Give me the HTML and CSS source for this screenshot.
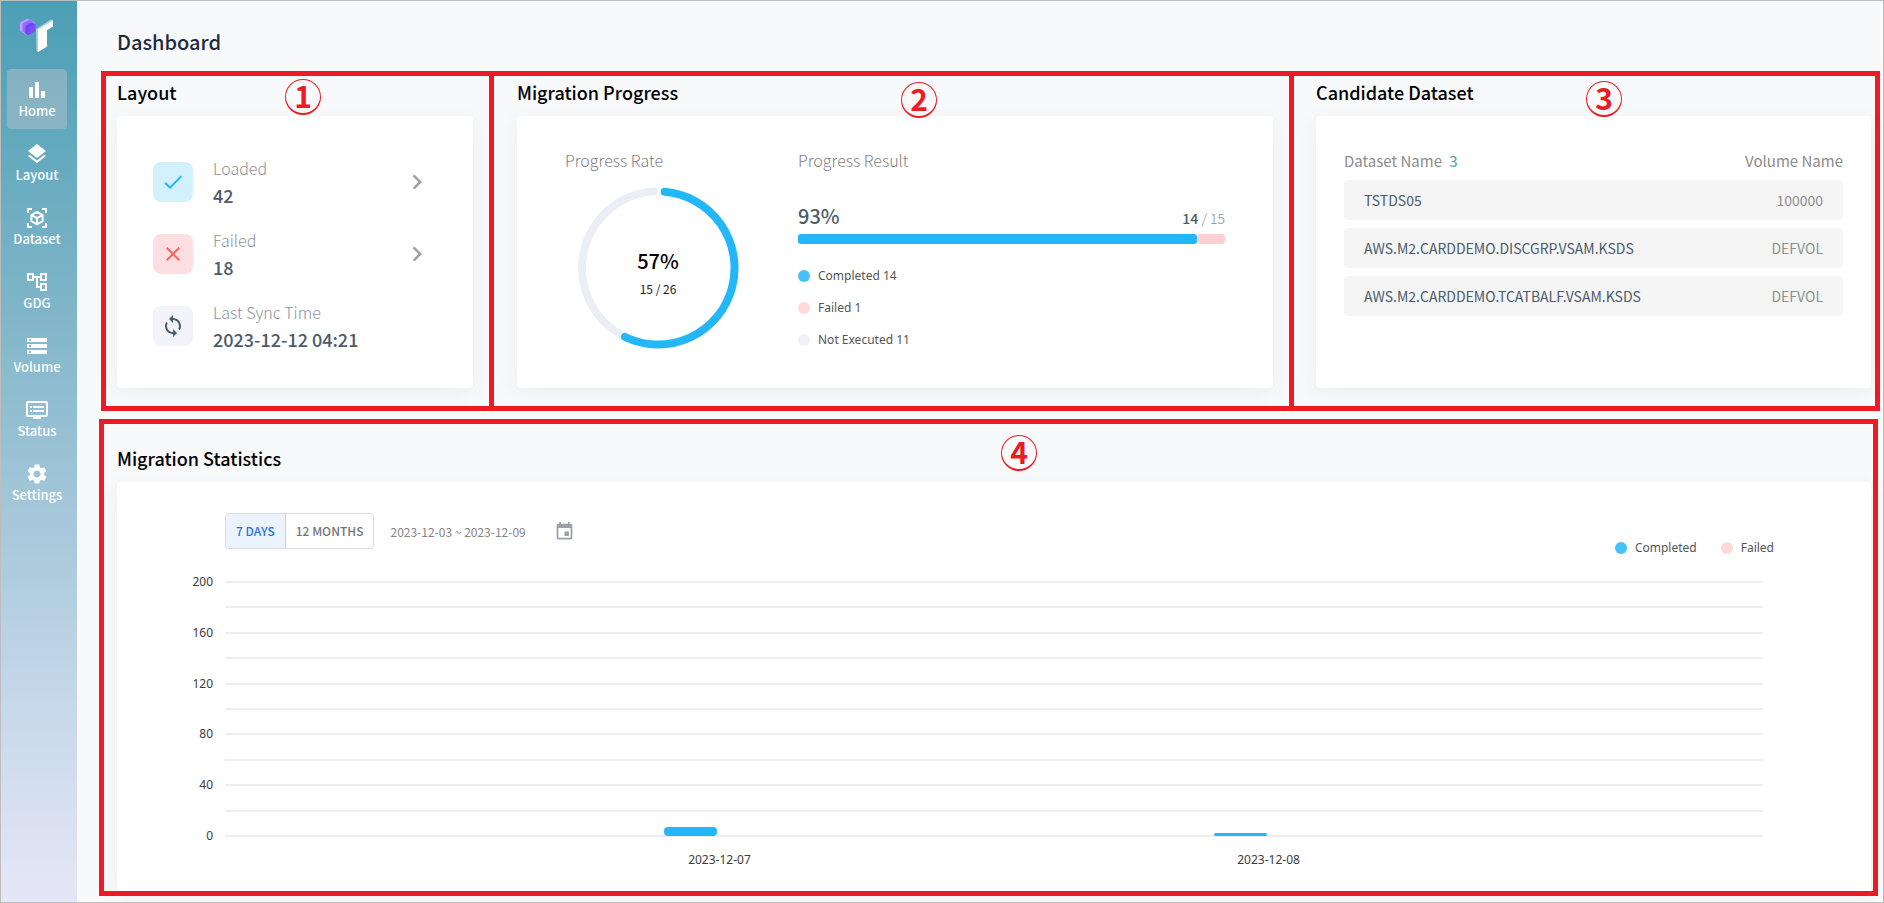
FILE: index.html
```html
<!DOCTYPE html>
<html lang="en">
<head>
<meta charset="utf-8">
<title>Dashboard</title>
<link rel="stylesheet" href="styles.css">
</head>
<body>
<div class="app">
  <nav class="sidebar" aria-label="Main">
    <svg class="logo" viewBox="0 0 36 36" aria-hidden="true">
      <path d="M1 4.500 8.500 0.500 16 4.500V13L8.500 17.500 1 13z" fill="#b9a2ff"/>
      <path d="M3.500 5.500 10 2 16 5V13.200L9.500 17 3.500 13.500z" fill="#8f6bff"/>
      <path d="M6.500 8 12 4.800 16.200 6.500V13L9 17.200 6.500 15.500z" fill="#6f42f5"/>
      <path d="M9.500 9.500 16.200 5.800V13L9 17.200z" fill="#7b4dff"/>
      <path d="M17 11 32 1.500 34 2 34 8 27.500 12V29L19 34 17.500 33z" fill="#a9d3de"/>
      <path d="M19 11.500 34 2.500V8.500L28 12.300V28.500L19 34z" fill="#fff"/>
    </svg>
    <a class="nav-item nav-item-active" href="#home">
      <svg class="icon" viewBox="0 0 24 24"><path d="M4 9h4v11H4zM16 13h4v7h-4zM10 4h4v16h-4z"/></svg>
      Home
    </a>
    <a class="nav-item" href="#layout">
      <svg class="icon" viewBox="0 0 24 24"><path d="M11.990 18.540l-7.370-5.730L3 14.070l9 7 9-7-1.630-1.270-7.380 5.740zM12 16l7.360-5.730L21 9l-9-7-9 7 1.630 1.270L12 16z"/></svg>
      Layout
    </a>
    <a class="nav-item" href="#dataset">
      <svg class="icon icon-line" viewBox="0 0 24 24"><path d="M3 7V3h4M17 3h4v4M21 17v4h-4M7 21H3v-4M12 5.800l5.600 3.200v6.200L12 18.400l-5.600-3.200V9zM6.400 9l5.600 3.200L17.600 9M12 12.200v6.200"/></svg>
      Dataset
    </a>
    <a class="nav-item" href="#gdg">
      <svg class="icon" viewBox="0 0 24 24"><path d="M22 11V3h-7v3H9V3H2v8h7V8h2v10h4v3h7v-8h-7v3h-2V8h2v3h7zM7 9H4V5h3v4zm10 6h3v4h-3v-4zm0-10h3v4h-3V5z"/></svg>
      GDG
    </a>
    <a class="nav-item" href="#volume">
      <svg class="icon" viewBox="0 0 24 24"><path d="M2 20h20v-4H2v4zm2-3h2v2H4v-2zM2 4v4h20V4H2zm4 3H4V5h2v2zm-4 7h20v-4H2v4zm2-3h2v2H4v-2z"/></svg>
      Volume
    </a>
    <a class="nav-item" href="#status">
      <svg class="icon" viewBox="0 0 24 24"><path d="M21 3H3c-1.100 0-2 .9-2 2v12c0 1.100.9 2 2 2h5v2h8v-2h5c1.100 0 1.990-.9 1.990-2L23 5c0-1.100-.9-2-2-2zm0 14H3V5h18v12zm-2-9H8v2h11V8zm0 4H8v2h11v-2zM7 8H5v2h2V8zm0 4H5v2h2v-2z"/></svg>
      Status
    </a>
    <a class="nav-item" href="#settings">
      <svg class="icon" viewBox="0 0 24 24"><path d="M19.140 12.940c.04-.3.060-.61.060-.94 0-.32-.02-.64-.07-.94l2.030-1.580c.18-.14.230-.41.120-.61l-1.920-3.320c-.12-.22-.37-.29-.59-.22l-2.390.96c-.5-.38-1.030-.7-1.620-.94l-.36-2.540c-.04-.24-.24-.41-.48-.41h-3.840c-.24 0-.43.170-.47.410l-.36 2.540c-.59.240-1.130.570-1.620.940l-2.390-.96c-.22-.08-.47 0-.59.220L2.740 8.870c-.12.210-.08.470.120.610l2.030 1.580c-.05.3-.09.630-.09.940s.02.640.070.940l-2.030 1.580c-.18.140-.23.410-.12.610l1.920 3.320c.12.220.370.290.590.220l2.390-.96c.5.380 1.030.7 1.620.940l.36 2.540c.05.240.240.410.480.410h3.840c.24 0 .44-.17.470-.41l.36-2.540c.59-.24 1.130-.56 1.620-.94l2.390.96c.22.080.470 0 .59-.22l1.920-3.320c.12-.22.070-.47-.12-.61l-2.010-1.580zM12 15.600c-1.980 0-3.600-1.620-3.600-3.600s1.620-3.600 3.600-3.600 3.600 1.620 3.600 3.600-1.620 3.600-3.600 3.600z"/></svg>
      Settings
    </a>
  </nav>

  <main class="main">
    <h1 class="page-title">Dashboard</h1>

    <div class="overview">
      <section class="panel panel-layout">
        <span class="callout callout-1">1</span>
        <h2 class="panel-title">Layout</h2>
        <div class="card status-list">
          <div class="status-row">
            <span class="badge badge-ok"><svg class="icon" viewBox="0 0 24 24"><path d="M9 16.170 4.830 12l-1.420 1.410L9 19 21 7l-1.410-1.410z"/></svg></span>
            <div class="status-text"><span class="muted">Loaded</span><span class="value">42</span></div>
            <button class="icon-button" type="button" aria-label="Show loaded"><svg class="chevron" viewBox="0 0 24 24"><path d="M10 6 8.590 7.410 13.170 12l-4.580 4.590L10 18l6-6z"/></svg></button>
          </div>
          <div class="status-row">
            <span class="badge badge-fail"><svg class="icon" viewBox="0 0 24 24"><path d="M19 6.410 17.590 5 12 10.590 6.410 5 5 6.410 10.590 12 5 17.590 6.410 19 12 13.410 17.590 19 19 17.590 13.410 12z"/></svg></span>
            <div class="status-text"><span class="muted">Failed</span><span class="value">18</span></div>
            <button class="icon-button" type="button" aria-label="Show failed"><svg class="chevron" viewBox="0 0 24 24"><path d="M10 6 8.590 7.410 13.170 12l-4.580 4.590L10 18l6-6z"/></svg></button>
          </div>
          <div class="status-row">
            <span class="badge badge-sync"><svg class="icon" viewBox="0 0 24 24"><path d="M12 4V1L8 5l4 4V6c3.310 0 6 2.690 6 6 0 1.010-.25 1.970-.7 2.800l1.460 1.460C19.540 15.030 20 13.570 20 12c0-4.420-3.580-8-8-8zm0 14c-3.310 0-6-2.690-6-6 0-1.010.25-1.970.7-2.800L5.240 7.740C4.460 8.970 4 10.430 4 12c0 4.420 3.580 8 8 8v3l4-4-4-4v3z"/></svg></span>
            <div class="status-text"><span class="muted">Last Sync Time</span><span class="value">2023-12-12 04:21</span></div>
          </div>
        </div>
      </section>

      <section class="panel panel-progress">
        <span class="callout callout-2">2</span>
        <h2 class="panel-title">Migration Progress</h2>
        <div class="card progress">
          <div class="rate">
            <h3 class="card-label">Progress Rate</h3>
            <div class="ring">
              <svg class="ring-chart" viewBox="-81 -81 162 162" aria-hidden="true">
                <path class="ring-rest" d="M-38 66A76.500 76.500 0 0 1-4-76.400"/>
                <path class="ring-done" d="M6.700-76.200A76.500 76.500 0 1 1-33 69"/>
              </svg>
              <div class="ring-text"><strong class="ring-value">57%</strong><span class="ring-count">15 / 26</span></div>
            </div>
          </div>
          <div class="result">
            <h3 class="card-label">Progress Result</h3>
            <div class="result-head">
              <strong class="result-value">93%</strong>
              <span class="result-count"><b class="result-done">14</b> / 15</span>
            </div>
            <div class="bar"><span class="bar-done" style="width:93.4%"></span><span class="bar-failed"></span></div>
            <ul class="legend legend-column">
              <li class="legend-item"><span class="dot dot-done"></span>Completed 14</li>
              <li class="legend-item"><span class="dot dot-failed"></span>Failed 1</li>
              <li class="legend-item"><span class="dot dot-rest"></span>Not Executed 11</li>
            </ul>
          </div>
        </div>
      </section>

      <section class="panel panel-candidate">
        <span class="callout callout-3">3</span>
        <h2 class="panel-title">Candidate Dataset</h2>
        <div class="card candidate">
          <table class="datasets">
            <thead><tr><th>Dataset Name <span class="count">3</span></th><th>Volume Name</th></tr></thead>
            <tbody>
              <tr><td>TSTDS05</td><td>100000</td></tr>
              <tr><td>AWS.M2.CARDDEMO.DISCGRP.VSAM.KSDS</td><td>DEFVOL</td></tr>
              <tr><td>AWS.M2.CARDDEMO.TCATBALF.VSAM.KSDS</td><td>DEFVOL</td></tr>
            </tbody>
          </table>
        </div>
      </section>
    </div>

    <section class="panel panel-statistics">
      <span class="callout callout-4">4</span>
      <h2 class="panel-title">Migration Statistics</h2>
      <div class="card statistics">
        <div class="toolbar">
          <div class="toggle">
            <button class="toggle-button toggle-button-on" type="button" aria-pressed="true">7 DAYS</button>
            <button class="toggle-button" type="button" aria-pressed="false">12 MONTHS</button>
          </div>
          <span class="range">2023-12-03 ~ 2023-12-09</span>
          <button class="icon-button calendar-button" type="button" aria-label="Pick dates"><svg class="calendar" viewBox="0 0 24 24"><path d="M17 12h-5v5h5v-5zM16 1v2H8V1H6v2H5c-1.110 0-1.990.9-1.990 2L3 19c0 1.100.890 2 2 2h14c1.100 0 2-.9 2-2V5c0-1.100-.9-2-2-2h-1V1h-2zm3 18H5V8h14v11z"/></svg></button>
          <ul class="legend">
            <li class="legend-item"><span class="dot dot-done"></span>Completed</li>
            <li class="legend-item"><span class="dot dot-failed"></span>Failed</li>
          </ul>
        </div>
        <div class="chart">
          <div class="y-axis"><span>200</span><span>160</span><span>120</span><span>80</span><span>40</span><span>0</span></div>
          <div class="plot">
            <div class="grid-lines"><i></i><i></i><i></i><i></i><i></i><i></i><i></i><i></i><i></i><i></i><i></i></div>
            <div class="bars">
              <div class="bar-group"><span class="column" style="height:3.5%"></span><span class="column column-failed" style="height:0%"></span></div>
              <div class="bar-group"><span class="column" style="height:1%"></span><span class="column column-failed" style="height:0%"></span></div>
            </div>
          </div>
          <div class="x-axis"><span>2023-12-07</span><span>2023-12-08</span></div>
        </div>
      </div>
    </section>
  </main>
</div>
</body>
</html>
```
FILE: styles.css
```css
:root {
  --mark: #ed1c24;
  --blue: #24b7f8;
  --pink: #ffd0d3;
  --slate: #4b5b6b;
  --ui: "Noto Sans CJK KR", "Noto Sans CJK SC", "Noto Sans", sans-serif;
  --chart: "Noto Sans", "Open Sans", sans-serif;
}

* { box-sizing: border-box; }

body {
  margin: 0;
  background: #f8f9fb;
  color: #000;
  font-family: var(--ui);
  font-size: 16px;
}

h1, h2, h3, ul { margin: 0; padding: 0; font-weight: 500; }
ul { list-style: none; }

button {
  margin: 0;
  padding: 0;
  border: 0;
  background: none;
  font: inherit;
  color: inherit;
}

.app {
  display: flex;
  min-height: 100vh;
  border: 1px solid #bdbdbd;
}

.icon { width: 24px; height: 24px; fill: currentColor; }
.icon-line { fill: none; stroke: currentColor; stroke-width: 2; }

/* Sidebar */
.sidebar {
  display: flex;
  flex: none;
  flex-direction: column;
  align-items: center;
  gap: 4px;
  width: 76px;
  padding: 17px 10px 0 6px;
  background: linear-gradient(#4b9fb5, #79b2c6 30%, #a6c8da 58%, #c6d8ea 78%, #e6e7f6);
}

.logo { width: 36px; height: 36px; margin-bottom: 11px; }

.nav-item {
  display: flex;
  flex-direction: column;
  align-items: center;
  width: 60px;
  height: 60px;
  padding-top: 9px;
  border-radius: 4px;
  color: #fff;
  font-size: 13px;
  font-weight: 500;
  line-height: 18px;
  text-decoration: none;
}

.nav-item-active { background: rgba(188, 196, 204, .45); }

/* Page */
.main { flex: 1; min-width: 0; padding: 26px 5px 6px 22px; }

.page-title {
  margin: 0 0 14px 18px;
  color: #1f2a3f;
  font-size: 20px;
  line-height: 30px;
}

.overview {
  display: grid;
  grid-template-columns: minmax(0, 393fr) minmax(0, 800fr) minmax(0, 586fr);
  margin: 0 -2px 8px 2px;
}

.panel {
  position: relative;
  display: flex;
  flex-direction: column;
  padding: 4px 16px 18px 11px;
  border: 5px solid var(--mark);
}

.panel-progress { margin-left: -5px; padding-left: 23px; }
.panel-candidate { margin-left: -5px; padding-left: 22px; padding-right: 4px; }
.panel-statistics { padding: 22px 2px 0 13px; }

.panel-title { margin-bottom: 12px; font-size: 18px; line-height: 24px; }

.card {
  flex: 1;
  border-radius: 4px;
  background: #fff;
  box-shadow: 0 5px 20px rgba(60, 65, 75, .06);
}

.callout {
  position: absolute;
  display: grid;
  place-items: center;
  width: 36px;
  height: 36px;
  padding-bottom: 3px;
  border: 1px solid var(--mark);
  border-bottom-width: 2px;
  border-radius: 50%;
  color: var(--mark);
  font-size: 30px;
  font-weight: 700;
  line-height: 30px;
}

.callout-1 { top: 3px; left: 179px; }
.callout-2 { top: 6px; left: 407px; }
.callout-3 { top: 5px; left: 292px; }
.callout-4 { top: 11px; left: 897px; }

/* Layout card */
.status-list {
  display: flex;
  flex-direction: column;
  gap: 18px;
  padding: 39px 41px 35px 36px;
}

.status-row { display: flex; align-items: center; gap: 20px; }

.badge {
  display: grid;
  place-items: center;
  width: 40px;
  height: 40px;
  border-radius: 8px;
}

.badge-ok { background: #d3f0fd; color: #24b7f8; }
.badge-fail { background: #fedfe1; color: #fb6369; }
.badge-sync { background: #f3f4f9; color: var(--slate); }

.status-text { display: flex; flex: 1; flex-direction: column; line-height: 27px; }
.muted { color: #8d929b; font-weight: 300; }
.value { color: var(--slate); font-size: 18px; font-weight: 500; }

.icon-button { display: grid; place-items: center; color: #9ba1a9; }
.chevron { width: 30px; height: 30px; fill: currentColor; }

/* Progress card */
.progress {
  display: grid;
  grid-template-columns: 233px minmax(0, 1fr);
  padding: 32px 48px 0 48px;
}

.card-label { color: #7f7f7f; font-size: 16px; font-weight: 300; line-height: 24px; }

.ring {
  display: grid;
  place-items: center;
  width: 162px;
  height: 162px;
  margin: 15px 0 0 12px;
}

.ring-chart, .ring-text { grid-area: 1 / 1; }
.ring-chart { width: 162px; height: 162px; }
.ring-chart path { fill: none; stroke-width: 8; stroke-linecap: round; }
.ring-rest { stroke: #ebeff5; }
.ring-done { stroke: var(--blue); }
.ring-text { display: flex; flex-direction: column; align-items: center; line-height: 28px; padding-top: 14px; }
.ring-value { font-size: 20px; font-weight: 500; }
.ring-count { color: #222; font-size: 12px; }

.result-head {
  display: flex;
  align-items: flex-end;
  justify-content: space-between;
  margin: 30px 0 4px;
  color: #8d929b;
}

.result-value { color: var(--slate); font-size: 20px; font-weight: 500; line-height: 28px; }
.result-count { font-size: 14px; font-weight: 300; line-height: 24px; }
.result-done { color: var(--slate); font-weight: 500; }

.bar { display: flex; height: 10px; margin-bottom: 22px; }
.bar-done { border-radius: 3px; background: var(--blue); }
.bar-failed { flex: 1; border-radius: 3px; background: var(--pink); }

.legend {
  display: flex;
  gap: 24px;
  color: #555;
  font-family: var(--chart);
  font-size: 12px;
  font-weight: 400;
  line-height: 20px;
}

.legend-column { flex-direction: column; gap: 12px; }
.legend-item { display: flex; align-items: center; gap: 8px; }
.dot { width: 12px; height: 12px; border-radius: 50%; }
.dot-done { background: #46c1f9; }
.dot-failed { background: #ffd9da; }
.dot-rest { background: #f0f2f7; }

/* Candidate card */
.candidate { padding: 26px 28px 0; }

.datasets { width: 100%; border-spacing: 0 8px; line-height: 22px; }
.datasets th { padding: 0; color: #8c8c8c; font-size: 15px; font-weight: 400; text-align: left; }
.datasets th:last-child, .datasets td:last-child { text-align: right; }
.datasets td { padding: 9px 20px; background: #f5f5f5; color: var(--slate); font-size: 14px; }
.datasets td:first-child { border-radius: 4px 0 0 4px; }
.datasets td:last-child { border-radius: 0 4px 4px 0; color: #8f8f8f; }
.count { margin-left: 4px; color: #4b9fb5; }

/* Statistics card */
.statistics { padding: 31px 0 21px; }

.toolbar { display: flex; align-items: flex-start; padding: 0 97px 0 108px; }

.toggle {
  display: flex;
  height: 36px;
  border: 1px solid #dadcdf;
  border-radius: 4px;
  overflow: hidden;
}

.toggle-button { padding: 0 10px 2px; color: #757575; font-size: 12px; font-weight: 500; }
.toggle-button-on { border-right: 1px solid #c9d1dc; background: #ebf3fc; color: #1f74d6; }

.range { margin-left: 16px; color: #858585; font-size: 12px; line-height: 38px; }
.calendar-button { height: 36px; margin-left: 28px; }
.calendar { width: 21px; height: 21px; fill: currentColor; }
.toolbar .legend { margin: 25px 0 0 auto; }

.chart {
  display: grid;
  grid-template-columns: 108px minmax(0, 1fr);
  margin: 23px 108px 0 0;
  color: #3c3c3c;
  font-family: var(--chart);
  font-size: 12px;
}

.y-axis {
  display: flex;
  flex-direction: column;
  justify-content: space-between;
  margin: -7px 0;
  padding-right: 12px;
  line-height: 16px;
  text-align: right;
}

.plot { display: grid; height: 256px; }
.grid-lines, .bars { grid-area: 1 / 1; }
.grid-lines { display: flex; flex-direction: column; justify-content: space-between; }
.grid-lines i { height: 2px; background: #eee; }

.bars, .x-axis { display: grid; grid-template-columns: 1fr 1fr; padding: 0 14.300%; }
.bars { padding-bottom: 1px; }
.bar-group { display: flex; align-items: flex-end; justify-content: center; gap: 4px; }
.column { width: 53px; border-radius: 4px; background: var(--blue); }
.column-failed { background: var(--pink); }

.x-axis { grid-column: 2; margin-top: 13px; line-height: 20px; text-align: center; }
```
